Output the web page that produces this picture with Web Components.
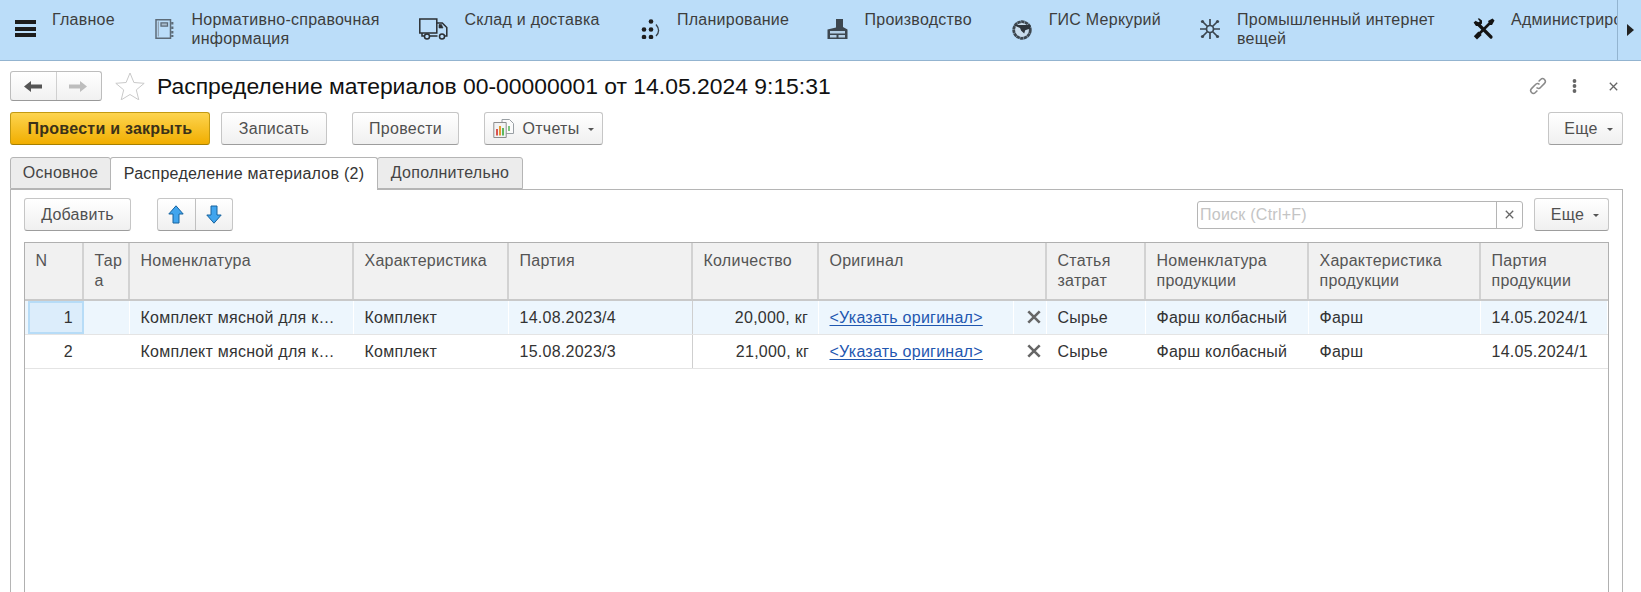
<!DOCTYPE html>
<html lang="ru"><head><meta charset="utf-8">
<style>
html,body{margin:0;padding:0;height:592px;overflow:hidden;background:#fff;font-family:"Liberation Sans",Arial,sans-serif;font-size:16px;letter-spacing:.25px;color:#333}
x-page{height:592px}
</style></head><body>
<script>
const T = (css, html) => `<style>${css}</style>${html}`;
class Base extends HTMLElement {
  constructor(){super();this.attachShadow({mode:'open'});}
  connectedCallback(){ this.render(); }
}
const ICONS = {
  doc:`<svg width="19" height="20" viewBox="0 0 19 20" fill="none"><path d="M1 .8h14.500v18.400H1z" stroke="#5d6b78" stroke-width="1.500"/><path d="M3.200 2.500h.1v15" stroke="#8a98a5" stroke-width="1"/><path d="M6 3.800h6.500v3.400H6z" stroke="#5d6b78" stroke-width="1.300" fill="#a9bccd"/><path d="M17.300 3v2.500M17.300 7.500V10M17.300 12v2.500M17.300 16v2" stroke="#5d6b78" stroke-width="2.200"/></svg>`,
  truck:`<svg width="29" height="22" viewBox="0 0 29 22" fill="none" stroke="#2b2f33" stroke-width="1.500"><path d="M.8 1h17v14H.8z"/><path d="M17.800 5h5.500l4.500 4.500V18h-2.300M18.500 18h-8M5.500 18H3v-3"/><path d="M20 6.500h2.500l1.500 3.500h-4z" fill="#2b2f33" stroke-width=".6"/><circle cx="8" cy="18.500" r="2.500"/><circle cx="23" cy="18.500" r="2.500"/></svg>`,
  plan:`<svg width="20" height="20" viewBox="0 0 20 20" fill="#1d1d1d"><circle cx="11" cy="2.500" r="2.300"/><circle cx="4" cy="10.500" r="2.300"/><circle cx="11" cy="10.500" r="2.300"/><circle cx="4" cy="18" r="2.300"/><circle cx="11" cy="18" r="2.300"/><path d="M16 5.500c3.200 3.800 3.200 8.200 0 11.500" fill="none" stroke="#39424a" stroke-width="1.300"/></svg>`,
  factory:`<svg width="21" height="20" viewBox="0 0 21 20"><path d="M.5 20V10.500l8.500-2V0h7v8l4.500 2.500V20z" fill="#3d4750"/><path d="M3 12h15v2.500H3zM3 16h6.500v2.500H3zM11.500 16H18v2.500h-6.500z" fill="#b4cfe6"/></svg>`,
  gis:`<svg width="20" height="20" viewBox="0 0 20 20"><circle cx="10" cy="10" r="8.300" fill="#c9dcec" stroke="#3d4750" stroke-width="2.800" stroke-dasharray="3.400 .4"/><path d="M1.500 5h17l-.3 3.500-5 1.700-1 3.300-3-2.800L8 8z" fill="#2e353c"/></svg>`,
  iot:`<svg width="22" height="22" viewBox="0 0 22 22"><g stroke="#3c4650" stroke-width="1.700" fill="none"><circle cx="11" cy="11" r="3.500"/><path d="M11 1v6M11 15v6M1 11h6M15 11h6M4 4l4.500 4.500M13.500 13.500L18 18M18 4l-4.500 4.500M8.500 13.500L4 18"/></g><g fill="#3c4650"><circle cx="3.500" cy="3.500" r="1.600"/><circle cx="18.500" cy="3.500" r="1.600"/><circle cx="3.500" cy="18.500" r="1.600"/><circle cx="18.500" cy="18.500" r="1.600"/></g></svg>`,
  tools:`<svg width="22" height="22" viewBox="0 0 22 22"><path d="M4.500 5.500L18 19" stroke="#141414" stroke-width="3.200" stroke-linecap="round"/><path d="M18.500 3.500L6 16" stroke="#141414" stroke-width="2.600"/><path d="M.6 4.500L2.800 2.800l2.500 2 1.500-1.500-2-2.600 1.200-.5 3 2.300v3L6 8H3z" fill="#141414"/><path d="M15 3L19.500.5l2 2L19 7h-2z" fill="#141414"/><path d="M.8 18.200l4.600-4.600 3.300 3.300-4.700 4.700z" fill="#141414"/></svg>`,
  back:`<svg width="19" height="13" viewBox="0 0 19 13"><path d="M0 6.500L7 1v3.500h11v4H7V12z" fill="#555"/></svg>`,
  fwd:`<svg width="19" height="13" viewBox="0 0 19 13"><path d="M18 6.500L11 1v3.500H0v4h11V12z" fill="#bdbdbd"/></svg>`,
  report:`<svg width="21" height="19" viewBox="0 0 21 19"><path d="M9 .5h7.500l4 4V14.500H9z" fill="#fbfbfb" stroke="#9aa0a5"/><path d="M.8 3.500h12.400v15H.8z" fill="#f3f3f3" stroke="#8d8d8d"/><path d="M3 10h2v6.500H3z" fill="#d9534f"/><path d="M6 7h2v9.500H6z" fill="#e59a33"/><path d="M9 9h2v7.500H9z" fill="#5cb85c"/><path d="M15 7h2v5h-2z" fill="#7fc47f"/></svg>`,
  up:`<svg width="16" height="19" viewBox="0 0 16 19"><path d="M8 .8L15.200 9H11v9H5V9H.8z" fill="#41a5ee" stroke="#17639e" stroke-width="1"/></svg>`,
  down:`<svg width="16" height="19" viewBox="0 0 16 19"><path d="M8 18.200L15.200 10H11V1H5v9H.8z" fill="#41a5ee" stroke="#17639e" stroke-width="1"/></svg>`,
  star:`<svg width="30" height="28" viewBox="0 0 30 28"><path d="M15 1l3.900 9.500 10.300.8-7.900 6.600 2.500 10-8.800-5.400-8.800 5.400 2.500-10L.8 11.300l10.300-.8z" fill="#fff" stroke="#c9c9c9"/></svg>`,
  link:`<svg width="20" height="20" viewBox="0 0 20 20" fill="none" stroke="#8a8a8a" stroke-width="1.500"><path d="M8.500 11.500c1.500 1.500 3 1 4-.1l4-4c2.500-2.700-1.200-6.400-3.900-3.900l-2 2"/><path d="M11.500 8.500c-1.500-1.500-3-1-4 .1l-4 4c-2.500 2.700 1.200 6.400 3.900 3.900l2-2"/></svg>`,
  dots:`<svg width="5" height="14" viewBox="0 0 5 14" fill="#666"><circle cx="2.500" cy="2" r="1.900"/><circle cx="2.500" cy="7" r="1.900"/><circle cx="2.500" cy="12" r="1.900"/></svg>`,
  x:`<svg width="9" height="9" viewBox="0 0 9 9"><path d="M.8.8l7.400 7.400M8.200.8L.8 8.200" stroke="#666" stroke-width="1.300"/></svg>`,
  xb:`<svg width="14" height="14" viewBox="0 0 14 14"><path d="M1.300 1.300l11.400 11.400M12.700 1.300L1.300 12.700" stroke="#666" stroke-width="2.600"/></svg>`
};
customElements.define('x-icon', class extends Base{
  render(){ this.shadowRoot.innerHTML = `<style>:host{display:inline-flex;align-items:center;justify-content:center;flex:none}svg{display:block}</style>${ICONS[this.getAttribute('name')]}`; }
});
customElements.define('x-page', class extends Base{
  render(){ this.shadowRoot.innerHTML = T(`:host{display:flex;flex-direction:column;height:592px;overflow:hidden}`,`<slot></slot>`); }
});
customElements.define('x-topbar', class extends Base{
  render(){ this.shadowRoot.innerHTML = T(`
    :host{display:flex;flex:none;height:60px;background:#bbddf9;border-bottom:1px solid #93b4d0;overflow:hidden}
    .items{flex:none;width:1617px;display:grid;grid-template-columns:139.500px 273px 212.500px 187.500px 184.200px 188.300px 274px 158px;overflow:hidden}
    .more{flex:1;border-left:1px solid #93b4d0;display:flex;align-items:center;justify-content:center;padding:0 0 1px 2px}
    .tri{width:0;height:0;border-left:7px solid #222;border-top:6px solid transparent;border-bottom:6px solid transparent}
  `,`<div class="items"><slot></slot></div><div class="more"><div class="tri"></div></div>`); }
});
customElements.define('x-menu', class extends Base{
  render(){ const ic=this.getAttribute('icon'), ix=this.getAttribute('ix'), iy=this.getAttribute('iy')||'19';
    this.shadowRoot.innerHTML = T(`
    :host{display:block;overflow:hidden;height:60px;white-space:nowrap}
    .r{display:flex;height:60px}
    .i{flex:none;width:52px;padding-left:${ix}px;padding-top:${iy}px;box-sizing:border-box}
    .t{padding-top:10px;line-height:19px;font-size:16px;color:#3d3d3d}
    .ham{display:block;width:21px;height:4px;background:#1c1c1c;margin-bottom:2.500px}
  `, `<div class="r"><div class="i">${ic=='ham'?'<span class="ham"></span><span class="ham"></span><span class="ham"></span>':`<x-icon name="${ic}"></x-icon>`}</div><div class="t"><slot></slot></div></div>`); }
});
customElements.define('x-head', class extends Base{
  render(){ this.shadowRoot.innerHTML = T(`
    :host{display:flex;flex:none;align-items:center;height:30px;margin-top:10px;padding-left:10px;padding-right:23px}
    .nav{display:flex;width:92px;height:30px;box-sizing:border-box;border:1px solid #bdbdbd;border-bottom-color:#999;border-radius:3px;background:linear-gradient(#fff,#f1f1f1)}
    .nav div{flex:1;display:flex;align-items:center;justify-content:center}
    .nav div+div{border-left:1px solid #d0d0d0}
    .star{margin-left:13px;margin-right:12px}
    h1{margin:0;font:400 22.900px/30px "Liberation Sans",Arial,sans-serif;letter-spacing:0;color:#111;white-space:nowrap;flex:1}
    .a{display:flex;align-items:center}
  `,`<div class="nav"><div><x-icon name="back"></x-icon></div><div><x-icon name="fwd"></x-icon></div></div>
     <x-icon class="star" name="star"></x-icon><h1><slot></slot></h1>
     <div class="a"><x-icon name="link"></x-icon><x-icon name="dots" style="margin-left:24px"></x-icon><x-icon name="x" style="margin-left:32px"></x-icon></div>`); }
});
customElements.define('x-btn', class extends Base{
  render(){ const p=this.hasAttribute('primary'), d=this.hasAttribute('drop'), ic=this.getAttribute('icon'), w=this.getAttribute('w');
    this.shadowRoot.innerHTML = T(`
    :host{display:inline-flex;flex:none;box-sizing:border-box;width:${w}px;height:33px;align-items:center;justify-content:center;white-space:nowrap;
      border:1px solid ${p?'#c39a12':'#c6c6c6'};border-bottom-color:${p?'#a67f00':'#9d9d9d'};border-radius:3px;font-size:16px;
      background:${p?'linear-gradient(#fdd44f,#f1ae00)':'linear-gradient(#fff,#f0f0f0)'};color:${p?'#3b3118':'#505050'};font-weight:${p?'700':'400'}}
    .tri{width:0;height:0;border-top:3px solid #555;border-left:3px solid transparent;border-right:3px solid transparent;margin-left:9px;margin-top:2px}
    x-icon{margin-right:9px}
  `,`${ic?`<x-icon name="${ic}"></x-icon>`:''}<slot></slot>${d?'<span class="tri"></span>':''}`); }
});
customElements.define('x-actions', class extends Base{
  render(){ this.shadowRoot.innerHTML = T(`:host{display:flex;flex:none;align-items:center;margin-top:11px;padding:0 18px 0 10px;height:33px}`,`<slot></slot>`); }
});
customElements.define('x-tabs', class extends Base{
  render(){ this.shadowRoot.innerHTML = T(`:host{display:flex;flex:none;height:33px;margin-top:12px;padding-left:10px;position:relative;z-index:1}`,`<slot></slot>`); }
});
customElements.define('x-tab', class extends Base{
  render(){ const a=this.hasAttribute('active');
    this.shadowRoot.innerHTML = T(`
    :host{display:flex;box-sizing:border-box;width:${this.getAttribute('w')}px;height:${a?33:32}px;align-items:center;justify-content:center;white-space:nowrap;font-size:16px;
      border:1px solid #b5b5b5;${a?'border-bottom:none;':''}margin-left:${this.hasAttribute('first')?0:-1}px;border-radius:3px 3px 0 0;
      background:${a?'#fff':'#ececec'};color:${a?'#333':'#444'};padding-bottom:${a?0:1}px}
  `,`<slot></slot>`); }
});
customElements.define('x-panel', class extends Base{
  render(){ this.shadowRoot.innerHTML = T(`:host{display:flex;flex-direction:column;flex:1;min-height:0;margin:-1px 18px 0 10px;border:1px solid #b5b5b5;border-bottom:none;padding:8px 13px 0 13px}`,`<slot></slot>`); }
});
customElements.define('x-toolbar', class extends Base{
  render(){ this.shadowRoot.innerHTML = T(`:host{display:flex;flex:none;align-items:center;height:33px}`,`<slot></slot>`); }
});
customElements.define('x-updown', class extends Base{
  render(){ this.shadowRoot.innerHTML = T(`
    :host{display:flex;flex:none;width:76px;height:33px;margin-left:26px;box-sizing:border-box;border:1px solid #c6c6c6;border-bottom-color:#9d9d9d;border-radius:3px;background:linear-gradient(#fff,#f0f0f0)}
    div{flex:1;display:flex;align-items:center;justify-content:center}
    div+div{border-left:1px solid #c0c0c0}
  `,`<div><x-icon name="up"></x-icon></div><div><x-icon name="down"></x-icon></div>`); }
});
customElements.define('x-search', class extends Base{
  render(){ this.shadowRoot.innerHTML = T(`
    :host{display:flex;flex:none;width:326px;height:28px;margin-left:auto;margin-right:11px;box-sizing:border-box;border:1px solid #b5b5b5;border-radius:3px;background:#fff}
    .p{flex:1;line-height:26px;padding-left:2px;color:#c4c4c4;font-size:16px}
    .c{width:25px;border-left:1px solid #b5b5b5;display:flex;align-items:center;justify-content:center}
  `,`<div class="p"><slot></slot></div><div class="c"><x-icon name="x"></x-icon></div>`); }
});
const COLS=[59,46,224,155,184,126,228,99,163,172,127];
const HEAD=['N','Тар<br>а','Номенклатура','Характеристика','Партия','Количество','Оригинал','Статья<br>затрат','Номенклатура<br>продукции','Характеристика<br>продукции','Партия<br>продукции'];
customElements.define('x-table', class extends Base{
  render(){
    const rows=[['1','','Комплект мясной для к…','Комплект','14.08.2023/4','20,000, кг','','Сырье','Фарш колбасный','Фарш','14.05.2024/1'],
                ['2','','Комплект мясной для к…','Комплект','15.08.2023/3','21,000, кг','','Сырье','Фарш колбасный','Фарш','14.05.2024/1']];
    const cell=(v,i,r)=>{
      if(i==6) return `<div class="c orig"><a>&lt;Указать оригинал&gt;</a><span class="clr"><x-icon name="xb"></x-icon></span></div>`;
      let k='c'; if(i==0)k+=' n'; if(i==5)k+=' q'; if(i==4)k+=' pre';
      return `<div class="${k}${i==0&&r==0?' cur':''}"><span>${v}</span></div>`;
    };
    this.shadowRoot.innerHTML = T(`
    :host{display:flex;flex-direction:column;flex:1;min-height:0;margin:11px 0 0 0;border:1px solid #b0b0b0;border-bottom:none;font-size:16px;color:#333}
    .row{display:grid;grid-template-columns:${COLS.map(c=>c+'px').join(' ')}}
    .h{height:56px;background:#f1f1f1;border-bottom:2px solid #c9c9c9;color:#555}
    .h div{padding:8px 0 0 10.500px;line-height:19.500px;border-right:2px solid #d2d2d2;box-sizing:border-box;overflow:hidden;white-space:nowrap}
    .h div:last-child{border-right:none}
    .d{height:33px;border-bottom:1px solid #e4e4e4}
    .d.s{background:#edf6fd}
    .c{box-sizing:border-box;height:33px;line-height:34px;padding:0 10px 0 10.500px;overflow:hidden;white-space:nowrap}
    .c span{display:block}
    .s .c{border-right:1px solid #fff}
    .n{text-align:right;padding-right:11px}
    .q{text-align:right}
    .pre{border-right:1px solid #cfcfcf!important}
    .cur{border:2px solid #b7dcf7!important;margin-left:3px;background:#dcedfb;line-height:30px;padding-right:9px}
    .orig{display:flex;align-items:center;padding:0 0 0 10.500px}
    .orig a{color:#1f57b0;text-decoration:underline;text-underline-offset:2px;line-height:20px;padding-top:1px}
    .clr{margin-left:auto;width:33px;height:33px;box-sizing:border-box;display:flex;align-items:center;padding:1px 0 0 13px}
    .s .clr{border-left:1px solid #fff}
  `,`<div class="row h">${HEAD.map(h=>`<div>${h}</div>`).join('')}</div>
     ${rows.map((r,ri)=>`<div class="row d${ri==0?' s':''}">${r.map((v,i)=>cell(v,i,ri)).join('')}</div>`).join('')}`);
  }
});
</script>
<x-page>
  <x-topbar>
    <x-menu icon="ham" ix="15" iy="20">Главное</x-menu>
    <x-menu icon="doc" ix="15" iy="19">Нормативно-справочная<br>информация</x-menu>
    <x-menu icon="truck" ix="6" iy="18">Склад и доставка</x-menu>
    <x-menu icon="plan" ix="15" iy="19">Планирование</x-menu>
    <x-menu icon="factory" ix="14" iy="19">Производство</x-menu>
    <x-menu icon="gis" ix="15" iy="20">ГИС Меркурий</x-menu>
    <x-menu icon="iot" ix="14" iy="18">Промышленный интернет<br>вещей</x-menu>
    <x-menu icon="tools" ix="14" iy="18">Администрирование</x-menu>
  </x-topbar>
  <x-head>Распределение материалов 00-00000001 от 14.05.2024 9:15:31</x-head>
  <x-actions>
    <x-btn primary w="200">Провести и закрыть</x-btn>
    <x-btn w="106" style="margin-left:11px">Записать</x-btn>
    <x-btn w="107" style="margin-left:25px">Провести</x-btn>
    <x-btn w="119" drop icon="report" style="margin-left:25px">Отчеты</x-btn>
    <span style="flex:1"></span>
    <x-btn w="75" drop style="padding-left:6px">Еще</x-btn>
  </x-actions>
  <x-tabs>
    <x-tab first w="101">Основное</x-tab>
    <x-tab active w="268">Распределение материалов (2)</x-tab>
    <x-tab w="146">Дополнительно</x-tab>
  </x-tabs>
  <x-panel>
    <x-toolbar>
      <x-btn w="107">Добавить</x-btn>
      <x-updown></x-updown>
      <x-search>Поиск (Ctrl+F)</x-search>
      <x-btn w="75" drop style="padding-left:7px">Еще</x-btn>
    </x-toolbar>
    <x-table></x-table>
  </x-panel>
</x-page>
</body></html>
